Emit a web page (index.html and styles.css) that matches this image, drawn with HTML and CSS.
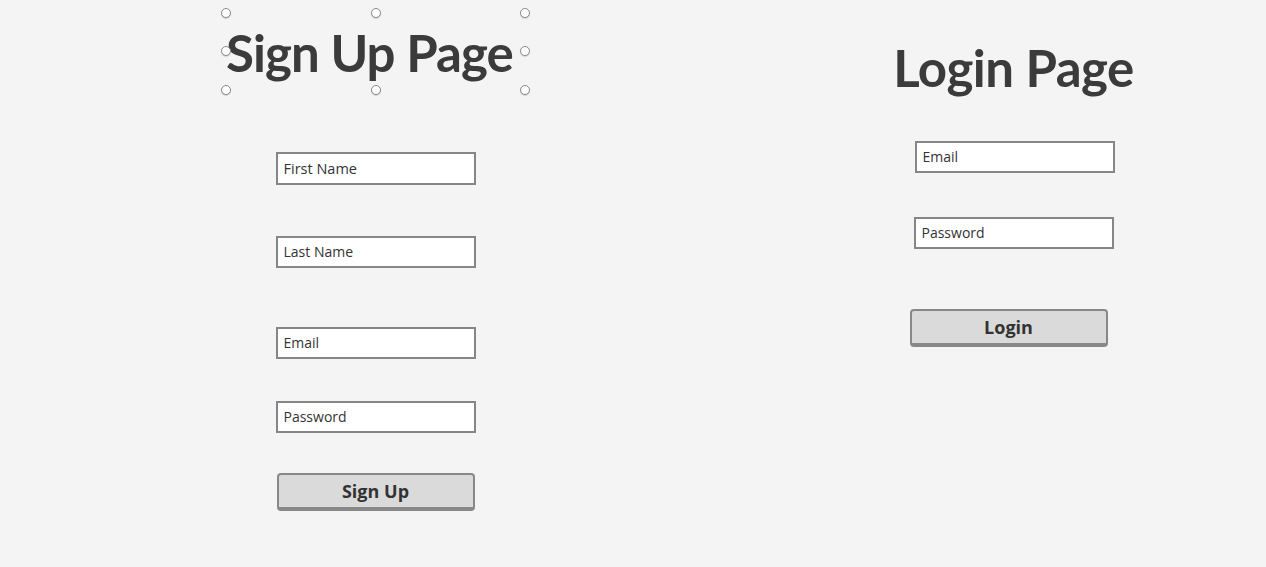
FILE: index.html
```html
<!DOCTYPE html>
<html>
<head>
<meta charset="utf-8">
<link rel="stylesheet" href="styles.css">
</head>
<body>
<div class="canvas">
  <section class="col col-signup">
    <div class="title-box">
      <h1 class="title">Sign Up Page</h1>
      <span class="handle h-tl"></span><span class="handle h-tc"></span><span class="handle h-tr"></span>
      <span class="handle h-ml"></span><span class="handle h-mr"></span>
      <span class="handle h-bl"></span><span class="handle h-bc"></span><span class="handle h-br"></span>
    </div>
    <div class="field f-first">First Name</div>
    <div class="field f-last">Last Name</div>
    <div class="field f-email">Email</div>
    <div class="field f-pass">Password</div>
    <div class="btn b-signup">Sign Up</div>
  </section>
  <section class="col col-login">
    <h1 class="title title-login">Login Page</h1>
    <div class="field l-email">Email</div>
    <div class="field l-pass">Password</div>
    <div class="btn b-login">Login</div>
  </section>
</div>
</body>
</html>
```
FILE: styles.css
```css
* { box-sizing: border-box; }
html, body { margin: 0; padding: 0; }
body {
  background: #f4f4f4;
  width: 1266px;
  height: 567px;
  overflow: hidden;
  font-family: "Open Sans", "Liberation Sans", sans-serif;
  color: #333;
}
.canvas {
  display: flex;
  padding-left: 226px;
}
.col {
  display: flex;
  flex-direction: column;
  align-items: center;
  width: 299px;
}
.col-signup { padding-top: 13px; }
.col-login { margin-left: 339px; padding-top: 42px; }
.title-box {
  position: relative;
  width: 299px;
  height: 77px;
  display: flex;
  align-items: center;
  justify-content: center;
}
.title {
  margin: 0;
  font-family: "Lato", "Liberation Sans", sans-serif;
  font-weight: 700;
  font-size: 51px;
  letter-spacing: -0.9px;
  line-height: 1;
  color: #3b3b3b;
  white-space: nowrap;
}
.title-box .title { margin-left: -12px; margin-top: 2px; }
.title-login { letter-spacing: -0.5px; }
.handle {
  position: absolute;
  width: 10px;
  height: 10px;
  border-radius: 50%;
  background: #fff;
  border: 1px solid #8a8a8a;
  box-shadow: 0 1px 1px rgba(0,0,0,0.15);
}
.h-tl { left: -5px; top: -5px; }
.h-tc { left: 145px; top: -5px; }
.h-tr { right: -5px; top: -5px; }
.h-ml { left: -5px; top: 33px; }
.h-mr { right: -5px; top: 33px; }
.h-bl { left: -5px; bottom: -5px; }
.h-bc { left: 145px; bottom: -5px; }
.h-br { right: -5px; bottom: -5px; }

.field {
  width: 200px;
  height: 32px;
  background: #fff;
  border: 2px solid #868686;
  font-size: 14px;
  line-height: 27px;
  padding-left: 6px;
  color: #333;
}
.f-first { margin-top: 62px; height: 33px; line-height: 29px; font-size: 14.5px; }
.f-last { margin-top: 51px; }
.f-email { margin-top: 59px; }
.f-pass { margin-top: 42px; }
.l-email { margin-top: 48px; margin-left: 2px; }
.l-pass { margin-top: 44px; }
.btn {
  width: 198px;
  height: 38px;
  background: #dadada;
  border: 2px solid #888;
  border-bottom-width: 4px;
  border-radius: 4px;
  text-align: center;
  font-weight: 700;
  font-size: 18px;
  line-height: 32px;
  color: #333;
}
.b-signup { margin-top: 40px; }
.b-login { margin-top: 60px; margin-left: -10px; }
```
